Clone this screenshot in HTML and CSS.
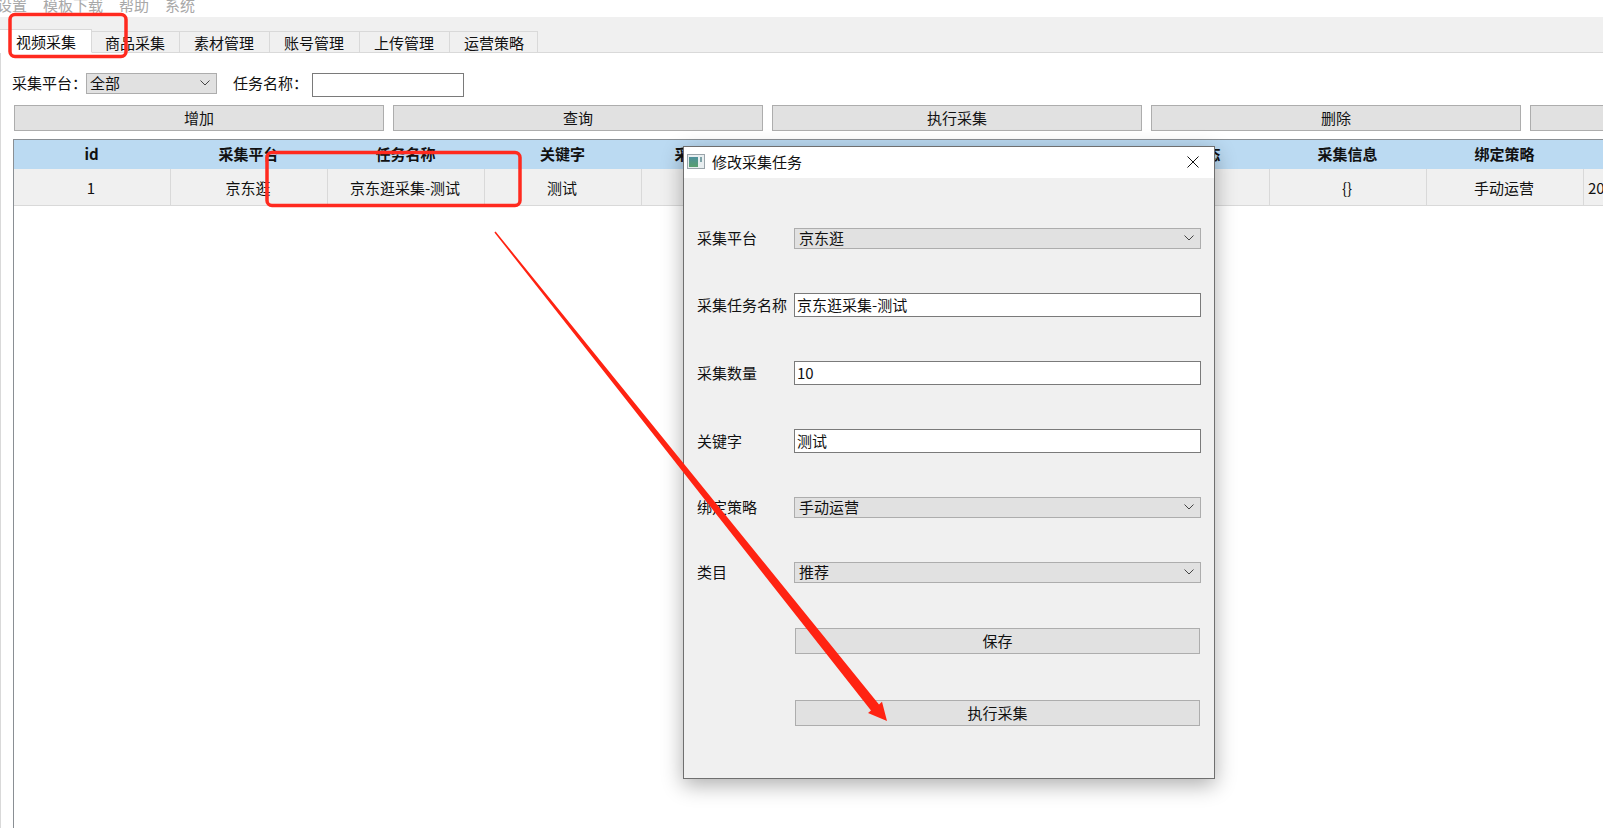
FILE: index.html
```html
<!DOCTYPE html>
<html lang="zh-CN">
<head>
<meta charset="utf-8">
<title>视频采集</title>
<link rel="stylesheet" href="styles.css">
</head>
<body>
<div class="app">
  <nav class="menu"><span class="menu-first">设置</span><span>模板下载</span><span>帮助</span><span>系统</span></nav>
  <div class="tabs">
    <div class="tab tab-active">视频采集</div>
    <div class="tab tab-second">商品采集</div>
    <div class="tab">素材管理</div>
    <div class="tab">账号管理</div>
    <div class="tab">上传管理</div>
    <div class="tab tab-last">运营策略</div>
  </div>
  <main class="panel">
    <div class="filters">
      <label class="filter-label">采集平台：</label>
      <div class="combo combo-small"><span>全部</span><svg class="chev" viewBox="0 0 10 6"><path d="M.5.5 5 5 9.5.5"/></svg></div>
      <label class="filter-label filter-label-second">任务名称：</label>
      <div class="field field-small"></div>
    </div>
    <div class="actions">
      <button class="btn">增加</button>
      <button class="btn">查询</button>
      <button class="btn">执行采集</button>
      <button class="btn">删除</button>
      <button class="btn"></button>
    </div>
    <div class="table-wrap">
      <table class="grid">
        <thead>
          <tr><th>id</th><th>采集平台</th><th>任务名称</th><th>关键字</th><th>采集任务数量</th><th></th><th></th><th>采集状态</th><th>采集信息</th><th>绑定策略</th><th></th></tr>
        </thead>
        <tbody>
          <tr><td>1</td><td>京东逛</td><td>京东逛采集-测试</td><td>测试</td><td></td><td></td><td></td><td></td><td>{}</td><td>手动运营</td><td class="cell-clip">20</td></tr>
        </tbody>
      </table>
    </div>
  </main>
</div>

<section class="dialog">
  <header class="dialog-title">
    <svg class="dialog-icon" viewBox="0 0 18 15">
      <defs><linearGradient id="ig" x1="0" y1="0" x2="0" y2="1"><stop offset="0" stop-color="#4d8f9c"/><stop offset="1" stop-color="#5aa06e"/></linearGradient></defs>
      <rect x=".5" y=".5" width="17" height="14" fill="#e8eef0" stroke="#9aa4aa"/>
      <rect x="2" y="3" width="9" height="10" fill="url(#ig)"/>
      <rect x="13" y="3" width="2" height="5" fill="#7fa3a8"/>
    </svg>
    <span class="dialog-name">修改采集任务</span>
    <svg class="dialog-close" viewBox="0 0 12 12"><path d="M.5.5 11.5 11.5M11.5.5.5 11.5"/></svg>
  </header>
  <div class="form">
    <div class="row"><span class="row-label">采集平台</span><div class="combo combo-wide"><span>京东逛</span><svg class="chev" viewBox="0 0 10 6"><path d="M.5.5 5 5 9.5.5"/></svg></div></div>
    <div class="row"><span class="row-label">采集任务名称</span><div class="field field-wide">京东逛采集-测试</div></div>
    <div class="row"><span class="row-label">采集数量</span><div class="field field-wide">10</div></div>
    <div class="row"><span class="row-label">关键字</span><div class="field field-wide">测试</div></div>
    <div class="row"><span class="row-label">绑定策略</span><div class="combo combo-wide"><span>手动运营</span><svg class="chev" viewBox="0 0 10 6"><path d="M.5.5 5 5 9.5.5"/></svg></div></div>
    <div class="row"><span class="row-label">类目</span><div class="combo combo-wide"><span>推荐</span><svg class="chev" viewBox="0 0 10 6"><path d="M.5.5 5 5 9.5.5"/></svg></div></div>
    <div class="row row-btn"><button class="btn btn-form">保存</button></div>
    <div class="row row-btn"><button class="btn btn-form">执行采集</button></div>
  </div>
</section>

<svg class="marks" viewBox="0 0 1603 828">
  <rect class="mark-box" x="10" y="14.5" width="116" height="42" rx="5"/>
  <rect class="mark-box" x="267" y="152.5" width="253" height="53" rx="5"/>
  <polygon class="mark-arrow" points="495.6,231.5 879,704.4 882,701.7 887,721 868,713 871,710.6 494.4,232.5"/>
</svg>
</body>
</html>
```
FILE: styles.css
```css
* { box-sizing: border-box; }
html, body { margin: 0; height: 100%; }
body {
  position: relative;
  width: 1603px;
  height: 828px;
  overflow: hidden;
  background: #fff;
  color: #111;
  font-family: "Noto Sans CJK SC", "Liberation Sans", sans-serif;
  font-size: 15px;
}
.app { display: flex; flex-direction: column; height: 828px; }

.menu {
  display: flex;
  gap: 16px;
  height: 17px;
  overflow: hidden;
  line-height: 10px;
  color: #a8a8a8;
  background: #fff;
}
.menu-first { margin-left: -3px; }

.tabs {
  display: flex;
  align-items: flex-end;
  height: 36px;
  background: #f0f0f0;
  border-bottom: 1px solid #d9d9d9;
}
.tab {
  height: 22px;
  margin-bottom: -1px;
  padding: 0 15px 0 14px;
  line-height: 21px;
  white-space: nowrap;
  border: 1px solid #d9d9d9;
  border-left: 0;
  background: #f0f0f0;
}
.tab-active {
  height: 24px;
  padding: 0 15px 0 16px;
  line-height: 23px;
  background: #fff;
  border-bottom-color: #fff;
}
.tab-second { padding: 0 14px 0 13px; }
.tab-last { padding-right: 13px; }

.panel {
  display: flex;
  flex-direction: column;
  flex: 1;
  min-height: 0;
  border-left: 1px solid #d9d9d9;
}
.filters {
  display: flex;
  align-items: flex-start;
  height: 24px;
  margin: 20px 0 8px 11px;
}
.filter-label { width: 74px; line-height: 19px; white-space: nowrap; }
.filter-label-second { width: 79px; margin-left: 16px; }

.combo {
  display: flex;
  align-items: center;
  justify-content: space-between;
  padding-bottom: 1px;
  background: #e1e1e1;
  border: 1px solid #adadad;
  line-height: 18px;
  white-space: nowrap;
}
.combo-small { width: 131px; height: 21px; padding-left: 3px; padding-right: 6px; }
.combo-wide { width: 407px; height: 21px; padding-left: 4px; padding-right: 6px; }
.chev { width: 10px; height: 6px; flex: none; }
.chev path { fill: none; stroke: #444; stroke-width: 1; }

.field {
  background: #fff;
  border: 1px solid #7a7a7a;
  white-space: nowrap;
}
.field-small { width: 152px; height: 24px; }
.field-wide { width: 407px; height: 24px; padding: 0 2px; line-height: 22px; }

.actions {
  display: grid;
  grid-template-columns: repeat(5, 370px);
  gap: 9px;
  margin: 0 0 8px 13px;
}
.btn {
  height: 26px;
  padding: 0;
  font: inherit;
  line-height: 24px;
  color: #111;
  background: #e1e1e1;
  border: 1px solid #adadad;
  border-radius: 0;
}

.table-wrap {
  flex: 1;
  min-height: 0;
  margin-left: 12px;
  overflow: hidden;
  border-top: 1px solid #8a8f94;
  border-left: 1px solid #8a8f94;
}
.grid {
  table-layout: fixed;
  width: 1727px;
  border-collapse: separate;
  border-spacing: 0;
}
.grid th, .grid td { width: 157px; padding: 0 2px 0 0; text-align: center; white-space: nowrap; overflow: hidden; }
.grid th { height: 29px; padding-bottom: 2px; font-weight: 700; background: #bbdaf2; }
.grid td {
  height: 37px;
  background: #f0f0f0;
  border-right: 1px solid #d9d9d9;
  border-bottom: 1px solid #d9d9d9;
}
.grid td.cell-clip { text-align: left; padding-left: 4px; }

.dialog {
  position: absolute;
  left: 683px;
  top: 146px;
  width: 532px;
  height: 633px;
  background: #f0f0f0;
  border: 1px solid #6f6f6f;
  box-shadow: 0 6px 20px rgba(0, 0, 0, .32);
}
.dialog-title {
  display: flex;
  align-items: center;
  height: 31px;
  padding: 0 15px 2px 3px;
  background: #fff;
}
.dialog-icon { width: 18px; height: 15px; flex: none; }
.dialog-name { margin-left: 7px; flex: 1; }
.dialog-close { width: 12px; height: 12px; flex: none; }
.dialog-close path { fill: none; stroke: #111; stroke-width: 1; }

.form {
  display: grid;
  grid-template-rows: 65px 68px 68px 68px 65px 66px 72px 26px;
  margin-top: 50px;
  padding: 0 14px 0 13px;
}
.row { display: flex; align-items: center; align-self: start; }
.row-label { width: 97px; padding-bottom: 1px; white-space: nowrap; line-height: 20px; }
.row-btn { padding-left: 98px; }
.btn-form { width: 405px; }

.marks { position: absolute; left: 0; top: 0; width: 1603px; height: 828px; pointer-events: none; }
.mark-box { fill: none; stroke: #ff2a1f; stroke-width: 3.5; }
.mark-arrow { fill: #ff2312; }
```
